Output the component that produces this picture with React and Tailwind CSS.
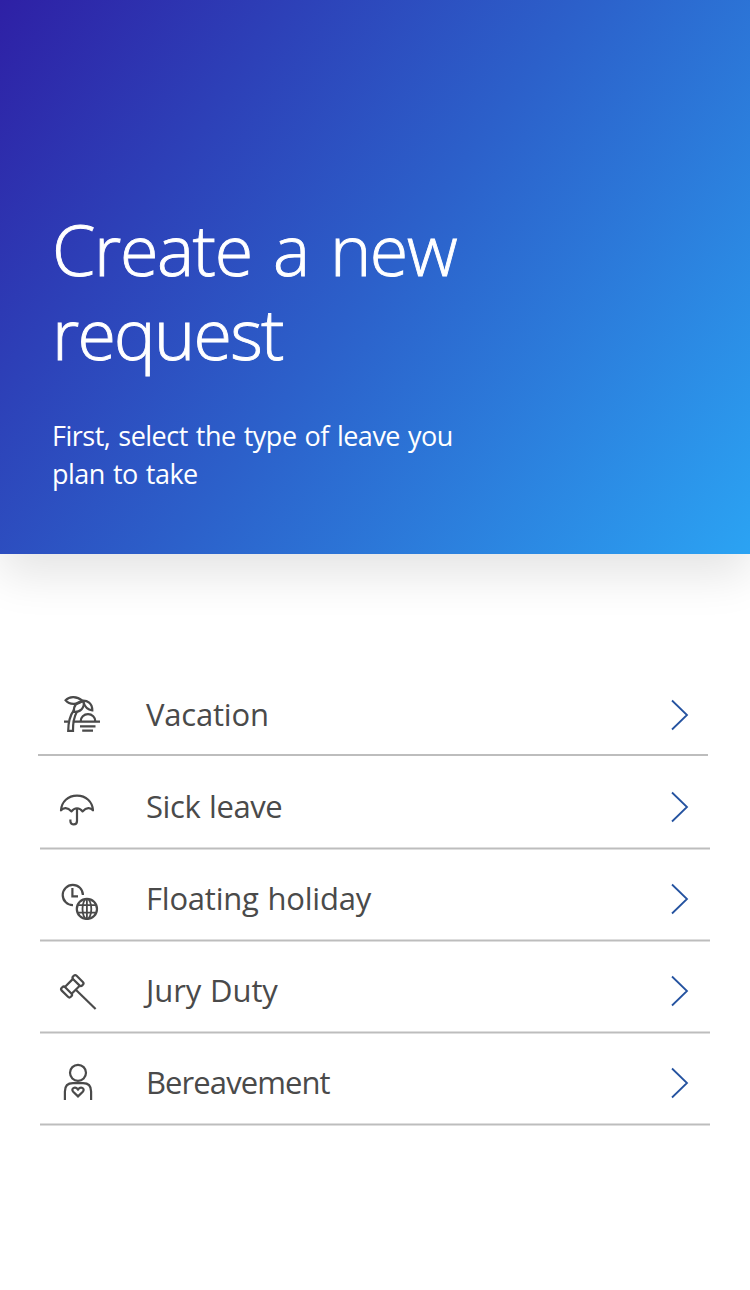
import React from "react";

function Icon({ viewBox, children }) {
  return (
    <svg
      className="h-[60px] w-[60px] shrink-0"
      viewBox={viewBox}
      fill="none"
      stroke="#4a4a4a"
      strokeWidth="2.2"
    >
      {children}
    </svg>
  );
}

const PalmIcon = () => (
  <Icon viewBox="0 0 60 60">
    <path d="M15.600 15.200C19.500 10.800 27 11 32.500 15.800C27 20.300 19.500 19.800 15.600 15.200Z" />
    <path d="M33.600 16.300C27 16.300 23.200 20.500 23.900 27C30.500 27 34.800 23 33.600 16.300Z" />
    <path d="M31.500 15.800C37.500 15 42.300 18.500 42.300 25.300C38 24.800 35 22.500 33.600 17.500" />
    <path d="M24 25C20 30.500 18.200 37 18.200 45.900H23C22.800 39 23.700 32.500 27 26.500" />
    <path d="M14 36.700H18.500M22.800 36.700H50M30.600 36.500A7.400 7.400 0 0 1 45.400 36.500M30 41.400H45.500M32.200 45.700H43" />
  </Icon>
);

const UmbrellaIcon = () => (
  <Icon viewBox="0 -3 60 60">
    <path
      strokeLinejoin="round"
      d="M11 30.400C11.500 21.700 18 15.600 27 15.600S42.500 21.700 43 30.400C40.500 27.200 36.500 27.200 32.500 31.400C29.500 27.200 24.500 27.200 21.500 31.400C17.500 27.200 13.500 27.200 11 30.400Z"
    />
    <path d="M27 28V41C27 45.600 20.400 45.600 20.400 41V39.500" />
  </Icon>
);

const ClockGlobeIcon = () => (
  <Icon viewBox="0 -1 60 60">
    <path d="M32.900 25A10.100 10.100 0 1 0 23 35.100M22.400 18V26.300H28" />
    <circle cx="36.900" cy="38.900" r="10.100" />
    <ellipse cx="36.900" cy="38.900" rx="4.400" ry="10.100" strokeWidth="1.8" />
    <path d="M28 35.200H45.800M28 42.700H45.800M36.900 29V49" strokeWidth="1.8" />
  </Icon>
);

const GavelIcon = () => (
  <Icon viewBox="0 -1 60 60">
    <g transform="translate(22.300 24.300) rotate(-45)">
      <rect x="-10.500" y="-6.400" width="4.800" height="12.800" rx="2" />
      <rect x="5.700" y="-6.400" width="4.800" height="12.800" rx="2" />
      <path d="M-5.700 -4.800H5.700M-5.700 4.800H5.700" />
    </g>
    <path d="M25.800 27.800L45.600 47" />
  </Icon>
);

const PersonHeartIcon = () => (
  <Icon viewBox="0 1 60 60">
    <circle cx="28" cy="20.800" r="8" />
    <path d="M14.900 48V39.500C14.900 34 18 31.200 23 31.200H33C38 31.200 41.100 34 41.100 39.500V48" />
    <path d="M28 44.400L23.200 39.800C20.500 37 24.800 33.500 28 37.500C31.200 33.500 35.500 37 32.800 39.800Z" />
  </Icon>
);

const rows = [
  { label: "Vacation", icon: PalmIcon, tracking: "tracking-[-0.2px]" },
  { label: "Sick leave", icon: UmbrellaIcon, tracking: "tracking-[-0.4px] [word-spacing:1px]" },
  { label: "Floating holiday", icon: ClockGlobeIcon, tracking: "tracking-[-0.22px] [word-spacing:1px]" },
  { label: "Jury Duty", icon: GavelIcon, tracking: "tracking-[-0.1px] [word-spacing:1px]" },
  { label: "Bereavement", icon: PersonHeartIcon, tracking: "tracking-[-0.92px]" },
];

function LeaveRow({ label, icon: RowIcon, tracking, first }) {
  return (
    <li className="flex h-[92px] flex-col">
      <button className="flex h-[78px] w-full items-center pl-[50px] pr-[60px] text-left">
        <RowIcon />
        <span className={`mb-[2px] ml-[36px] whitespace-nowrap text-[31px] leading-[44px] text-[#4a4a4a] ${tracking}`}>
          {label}
        </span>
        <svg className="ml-auto h-8 w-5" viewBox="0 0 20 32" fill="none" stroke="#2553a0" strokeWidth="1.8">
          <path d="M2 1.500L17 16L2 30.500" />
        </svg>
      </button>
      {first ? (
        <div className="ml-[38px] h-[2px] w-[670px] bg-[#bdbdbd]" />
      ) : (
        <svg className="ml-[40px] h-[4px] w-[670px]" viewBox="0 0 670 4">
          <path d="M0 2.400H670" stroke="#bdbdbd" strokeWidth="2" />
        </svg>
      )}
    </li>
  );
}

export default function App() {
  return (
    <main className="h-[1290px] w-[750px] overflow-hidden bg-white font-['Open_Sans','Noto_Sans',sans-serif]">
      <header className="h-[554px] bg-[linear-gradient(127deg,#2e20a5_0%,#2c60ca_50%,#2ba3f3_100%)] pl-[52px] pt-[207px] text-white shadow-[0_20px_44px_rgba(0,0,0,0.11)]">
        <h1 className="whitespace-nowrap text-[70px] font-light leading-[84px] [-webkit-text-stroke:0.9px_white]">
          <span className="block tracking-[-1.4px] [word-spacing:4.5px]">Create a new</span>
          <span className="block tracking-[-1.8px]">request</span>
        </h1>
        <p className="mt-[42px] whitespace-nowrap text-[27px] leading-[38px] tracking-[-0.5px] [word-spacing:1.5px]">
          First, select the type of leave you
          <br />
          plan to take
        </p>
      </header>
      <ul className="pt-[122px]">
        {rows.map((row, i) => (
          <LeaveRow key={row.label} {...row} first={i === 0} />
        ))}
      </ul>
    </main>
  );
}
